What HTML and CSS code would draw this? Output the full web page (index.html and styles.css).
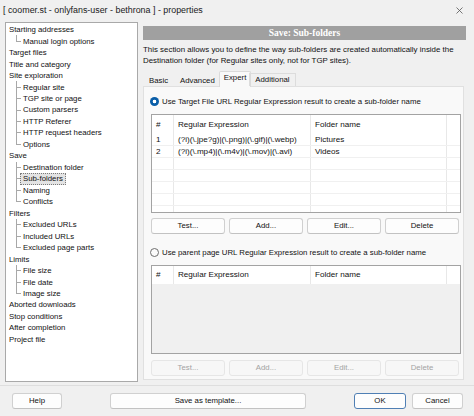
FILE: index.html
```html
<!DOCTYPE html>
<html>
<head>
<meta charset="utf-8">
<link rel="stylesheet" href="styles.css">
</head>
<body>
<div class="window">
  <div class="titlebar">
    <span class="title">[ coomer.st - onlyfans-user - bethrona ] - properties</span>
    <svg class="close" width="7" height="7" viewBox="0 0 7 7"><path d="M0.5 0.5L6.5 6.5M6.5 0.5L0.5 6.5" stroke="#555" stroke-width="0.8"/></svg>
  </div>
  <div class="main">
    <div class="tree">
      <div class="item root"><span>Starting addresses</span></div>
      <div class="item child last"><span>Manual login options</span></div>
      <div class="item root"><span>Target files</span></div>
      <div class="item root"><span>Title and category</span></div>
      <div class="item root"><span>Site exploration</span></div>
      <div class="item child"><span>Regular site</span></div>
      <div class="item child"><span>TGP site or page</span></div>
      <div class="item child"><span>Custom parsers</span></div>
      <div class="item child"><span>HTTP Referer</span></div>
      <div class="item child"><span>HTTP request headers</span></div>
      <div class="item child last"><span>Options</span></div>
      <div class="item root"><span>Save</span></div>
      <div class="item child"><span>Destination folder</span></div>
      <div class="item child"><span class="sel">Sub-folders</span></div>
      <div class="item child"><span>Naming</span></div>
      <div class="item child last"><span>Conflicts</span></div>
      <div class="item root"><span>Filters</span></div>
      <div class="item child"><span>Excluded URLs</span></div>
      <div class="item child"><span>Included URLs</span></div>
      <div class="item child last"><span>Excluded page parts</span></div>
      <div class="item root"><span>Limits</span></div>
      <div class="item child"><span>File size</span></div>
      <div class="item child"><span>File date</span></div>
      <div class="item child last"><span>Image size</span></div>
      <div class="item root"><span>Aborted downloads</span></div>
      <div class="item root"><span>Stop conditions</span></div>
      <div class="item root"><span>After completion</span></div>
      <div class="item root"><span>Project file</span></div>
    </div>
    <div class="content">
      <div class="banner">Save: Sub-folders</div>
      <div class="desc">This section allows you to define the way sub-folders are created automatically inside the<br>Destination folder (for Regular sites only, not for TGP sites).</div>
      <div class="tabs">
        <div class="tab">Basic</div>
        <div class="tab">Advanced</div>
        <div class="tab active">Expert</div>
        <div class="tab boxed">Additional</div>
      </div>
      <div class="panel">
        <div class="radio-row">
          <span class="radio on"></span>
          <span>Use Target File URL Regular Expression result to create a sub-folder name</span>
        </div>
        <div class="list list-a">
          <div class="row head">
            <div class="cell">#</div><div class="cell">Regular Expression</div><div class="cell">Folder name</div><div class="cell"></div>
          </div>
          <div class="row">
            <div class="cell">1</div><div class="cell">(?i)(\.jpe?g)|(\.png)|(\.gif)|(\.webp)</div><div class="cell">Pictures</div><div class="cell"></div>
          </div>
          <div class="row">
            <div class="cell">2</div><div class="cell">(?i)(\.mp4)|(\.m4v)|(\.mov)|(\.avi)</div><div class="cell">Videos</div><div class="cell"></div>
          </div>
          <div class="row"><div class="cell"></div><div class="cell"></div><div class="cell"></div><div class="cell"></div></div>
          <div class="row"><div class="cell"></div><div class="cell"></div><div class="cell"></div><div class="cell"></div></div>
          <div class="row"><div class="cell"></div><div class="cell"></div><div class="cell"></div><div class="cell"></div></div>
          <div class="row"><div class="cell"></div><div class="cell"></div><div class="cell"></div><div class="cell"></div></div>
          <div class="row"><div class="cell"></div><div class="cell"></div><div class="cell"></div><div class="cell"></div></div>
        </div>
        <div class="btn-row">
          <div class="btn">Test...</div><div class="btn">Add...</div><div class="btn">Edit...</div><div class="btn">Delete</div>
        </div>
        <div class="radio-row second">
          <span class="radio"></span>
          <span>Use parent page URL Regular Expression result to create a sub-folder name</span>
        </div>
        <div class="list list-b">
          <div class="row head">
            <div class="cell">#</div><div class="cell">Regular Expression</div><div class="cell">Folder name</div><div class="cell"></div>
          </div>
        </div>
        <div class="btn-row lower">
          <div class="btn off">Test...</div><div class="btn off">Add...</div><div class="btn off">Edit...</div><div class="btn off">Delete</div>
        </div>
      </div>
    </div>
  </div>
  <div class="footer">
    <div class="btn help">Help</div>
    <div class="btn save">Save as template...</div>
    <div class="spacer"></div>
    <div class="btn ok">OK</div>
    <div class="btn cancel">Cancel</div>
  </div>
</div>
</body>
</html>
```
FILE: styles.css
```css
html, body {
  margin: 0;
  padding: 0;
}
body {
  background: #f0f0f0;
  font-family: "Liberation Sans", Arial, sans-serif;
  font-size: 7.8px;
  color: #111;
  width: 474px;
  height: 416px;
  overflow: hidden;
}
.window {
  display: flex;
  flex-direction: column;
  width: 474px;
  height: 416px;
}
.titlebar {
  height: 22px;
  display: flex;
  align-items: center;
  justify-content: space-between;
  padding: 0 11px 2px 3px;
  box-sizing: border-box;
}
.title {
  font-size: 8.9px;
  color: #1a1a1a;
}
.close {
  display: block;
}
.main {
  display: flex;
  height: 360px;
  padding-left: 5px;
  gap: 5px;
}
.tree {
  width: 133px;
  height: 360px;
  box-sizing: border-box;
  background: #fff;
  border: 1px solid #a9a9a9;
  padding-top: 1px;
}
.item {
  height: 11.48px;
  line-height: 11.48px;
  white-space: nowrap;
}
.item span {
  display: inline-block;
  height: 10px;
  line-height: 10px;
  padding: 0 2px;
  border: 1px dotted transparent;
  vertical-align: top;
  margin-top: 0.2px;
}
.root {
  padding-left: 0;
}
.child {
  padding-left: 14px;
  background:
    linear-gradient(#a8a8a8, #a8a8a8) 10px 0 / 1px 100% no-repeat,
    linear-gradient(#a8a8a8, #a8a8a8) 10px 50% / 5px 1px no-repeat;
}
.child.last {
  background:
    linear-gradient(#a8a8a8, #a8a8a8) 10px 0 / 1px 50% no-repeat,
    linear-gradient(#a8a8a8, #a8a8a8) 10px 50% / 5px 1px no-repeat;
}
.item span.sel {
  background: #e3e3e3;
  border-color: #7a7a7a;
}
.content {
  width: 323px;
  display: flex;
  flex-direction: column;
  padding-top: 4px;
}
.banner {
  height: 14px;
  line-height: 14px;
  background: #a0a0a0;
  color: #fff;
  text-align: center;
  font-family: "Liberation Serif", "Times New Roman", serif;
  font-weight: bold;
  font-size: 9.5px;
}
.desc {
  margin-top: 4px;
  line-height: 11px;
  white-space: nowrap;
  font-size: 7.9px;
}
.tabs {
  margin-top: 5px;
  height: 15px;
  display: flex;
  align-items: flex-end;
  position: relative;
  z-index: 1;
}
.tab {
  height: 12px;
  line-height: 12px;
  padding: 0 5px;
  border: 1px solid transparent;
  border-bottom: none;
  box-sizing: border-box;
}
.tab.boxed {
  border-color: #dcdcdc;
  height: 13px;
}
.tab.active {
  height: 16px;
  line-height: 12px;
  padding: 0 4px;
  margin: 0 -2px -1px;
  background: #f9f9f9;
  border-color: #dadada;
  border-radius: 2px 2px 0 0;
}
.panel {
  height: 294px;
  margin-right: 2px;
  box-sizing: border-box;
  border: 1px solid #e0e0e0;
  background: #f9f9f9;
  padding: 8px 2px 3px 7px;
  display: flex;
  flex-direction: column;
}
.radio-row {
  height: 12px;
  display: flex;
  align-items: center;
  gap: 3px;
  margin-left: -1px;
  white-space: nowrap;
}
.radio-row.second {
  margin-top: 12px;
}
.radio {
  width: 9px;
  height: 9px;
  border-radius: 50%;
  box-sizing: border-box;
  border: 1px solid #6e6e6e;
  background: #fbfbfb;
  flex: none;
}
.radio.on {
  border: none;
  background: radial-gradient(circle, #fff 0 1.6px, #0a5ea8 2.1px);
}
.list {
  margin-top: 7px;
  border: 1px solid #a3a3a3;
  background: #fff;
  overflow: hidden;
  box-sizing: border-box;
}
.list-a {
  height: 99px;
}
.list-b {
  height: 89px;
  background: #f0f0f0;
}
.row {
  display: grid;
  grid-template-columns: 22px 137px 136px 1fr;
  height: 12px;
  line-height: 12px;
  border-bottom: 1px solid #f0f0f0;
  box-sizing: border-box;
  font-size: 8.1px;
}
.row.head {
  height: 19px;
  line-height: 19px;
  border-bottom: none;
  background: #fff;
}
.list-b .row.head {
  height: 18px;
  line-height: 18px;
}
.cell {
  padding-left: 4px;
  border-right: 1px solid #e8e8e8;
  white-space: nowrap;
  overflow: hidden;
}
.cell:last-child {
  border-right: none;
}
.btn-row {
  margin-top: 5px;
  display: grid;
  grid-template-columns: repeat(4, 74px);
  gap: 4px;
}
.btn-row.lower {
  margin-top: 6px;
}
.btn {
  height: 16px;
  line-height: 14px;
  text-align: center;
  box-sizing: border-box;
  border: 1px solid #d0d0d0;
  border-bottom-color: #c2c2c2;
  border-radius: 3px;
  background: #fdfdfd;
  white-space: nowrap;
}
.btn.off {
  color: #a3a3a3;
  background: #f7f7f7;
  border-color: #e6e6e6;
}
.footer {
  margin-top: 3px;
  border-top: 1px solid #dedede;
  padding: 7px 11px 0 12px;
  display: flex;
}
.help {
  width: 50px;
}
.save {
  width: 196px;
  margin-left: 48px;
}
.spacer {
  flex: 1;
}
.ok {
  width: 52px;
  border-color: #4f7fb4;
}
.cancel {
  width: 51px;
  margin-left: 6px;
}
```
